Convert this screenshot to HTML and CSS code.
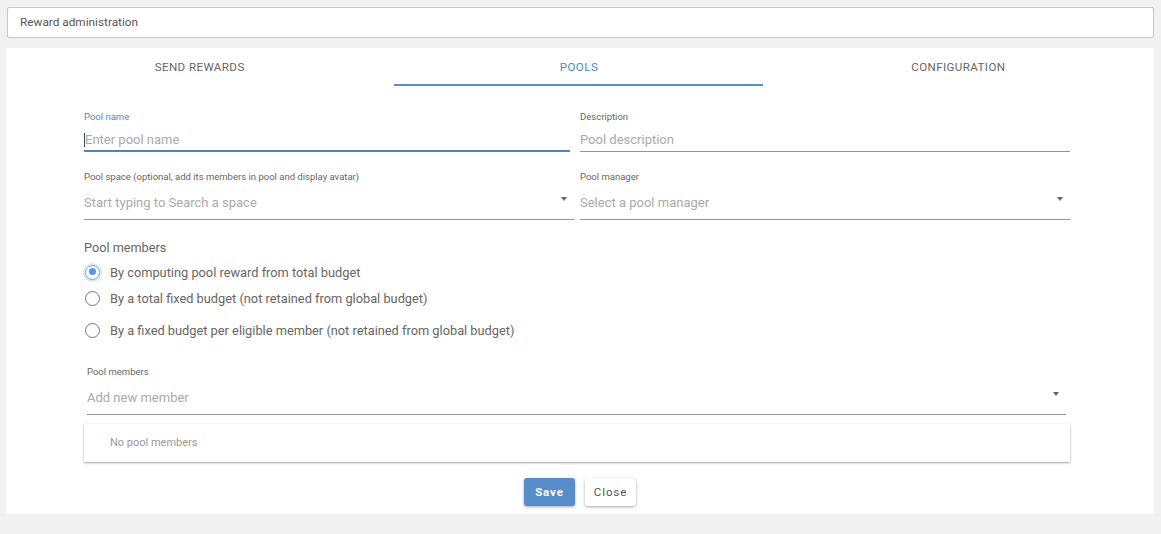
FILE: index.html
```html
<!DOCTYPE html>
<html>
<head>
<meta charset="utf-8">
<link rel="stylesheet" href="styles.css">
</head>
<body>
<div class="topbar">Reward administration</div>
<div class="panel">
  <div class="tabs">
    <div class="tab">SEND REWARDS</div>
    <div class="tab active">POOLS</div>
    <div class="tab">CONFIGURATION</div>
  </div>
  <div class="form">
    <div class="row row1">
      <div class="field focused">
        <div class="label">Pool name</div>
        <div class="input"><span class="caret"></span><span class="ph">Enter pool name</span></div>
      </div>
      <div class="field">
        <div class="label">Description</div>
        <div class="input"><span class="ph">Pool description</span></div>
      </div>
    </div>
    <div class="row row2">
      <div class="field sel">
        <div class="label">Pool space (optional, add its members in pool and display avatar)</div>
        <div class="input"><span class="ph">Start typing to Search a space</span><span class="arrow"></span></div>
      </div>
      <div class="field sel">
        <div class="label">Pool manager</div>
        <div class="input"><span class="ph">Select a pool manager</span><span class="arrow"></span></div>
      </div>
    </div>
    <div class="heading">Pool members</div>
    <div class="radios">
      <div class="radio checked"><span class="circle"></span><span>By computing pool reward from total budget</span></div>
      <div class="radio"><span class="circle"></span><span>By a total fixed budget (not retained from global budget)</span></div>
      <div class="radio third"><span class="circle"></span><span>By a fixed budget per eligible member (not retained from global budget)</span></div>
    </div>
    <div class="field sel members">
      <div class="label">Pool members</div>
      <div class="input"><span class="ph">Add new member</span><span class="arrow"></span></div>
    </div>
    <div class="card">No pool members</div>
    <div class="actions">
      <button class="btn primary">Save</button>
      <button class="btn">Close</button>
    </div>
  </div>
</div>
</body>
</html>
```

FILE: styles.css
```css
* { box-sizing: border-box; }
html, body { margin: 0; padding: 0; }
body {
  background: #f1f1f1;
  font-family: Roboto, "Liberation Sans", Arial, sans-serif;
  color: #666;
  height: 534px;
  overflow: hidden;
}
.topbar {
  margin: 7px 7px 0 7px;
  height: 31px;
  background: #fff;
  border: 1px solid #c8c8c8;
  border-radius: 2px;
  padding-left: 12px;
  font-size: 11.8px;
  line-height: 29px;
  color: #555;
}
.panel {
  margin: 10px 7px 0 6px;
  height: 466px;
  background: #fff;
}
.tabs {
  display: flex;
  height: 39px;
  padding: 0 6px 0 4px;
}
.tab {
  flex: 1;
  text-align: center;
  font-size: 11.6px;
  line-height: 39px;
  color: #666;
  letter-spacing: 0.4px;
  position: relative;
}
.tab.active { color: #4f88c6; }
.tab.active::after {
  content: "";
  position: absolute;
  left: 5px;
  right: 6px;
  bottom: 1px;
  height: 2px;
  background: #5a8dc9;
}
.form {
  padding: 0 84px 0 78px;
}
.row {
  display: flex;
  gap: 6px;
}
.row > .field { flex: 1; }
.row1 { margin-top: 24px; }
.row2 { margin-top: 19px; }
.field .label {
  font-size: 9.5px;
  line-height: 12px;
  height: 12px;
  color: #666;
  white-space: nowrap;
}
.field.focused .label { color: #4f88c6; }
.field .input {
  position: relative;
  border-bottom: 1px solid #959595;
  display: flex;
  align-items: center;
  font-size: 13px;
  line-height: 16px;
  color: #aaa;
  padding: 9px 0 3px 0;
  height: 29px;
}
.row1 .field:first-child .input { margin-right: 4px; }
.field.focused .input {
  border-bottom: 2px solid #4a84c4;
  padding-bottom: 2px;
}
.caret {
  display: inline-block;
  width: 1px;
  height: 14px;
  background: #2a4a70;
}
.field.sel .input {
  height: 37px;
  padding: 12px 0 8px 0;
}
.arrow {
  position: absolute;
  right: 7px;
  top: 14px;
  width: 0;
  height: 0;
  border-left: 3.5px solid transparent;
  border-right: 3.5px solid transparent;
  border-top: 4px solid #666;
}
.heading {
  margin-top: 20px;
  font-size: 12.7px;
  line-height: 16px;
  color: #666;
}
.radios { margin-top: 7px; }
.radio {
  display: flex;
  align-items: center;
  height: 18px;
  font-size: 12.8px;
  color: #666;
  margin-bottom: 8px;
}
.radio.third { margin-top: 14px; }
.radio .circle {
  width: 15px;
  height: 15px;
  border-radius: 50%;
  border: 1.5px solid #777;
  margin: 0 10px 0 1px;
  flex: none;
  position: relative;
}
.radio.checked .circle {
  border-color: #6b9eea;
  box-shadow: 0 0 0 2px #dde8fb;
}
.radio.checked .circle::after {
  content: "";
  position: absolute;
  left: 2.5px;
  top: 2.5px;
  width: 7px;
  height: 7px;
  border-radius: 50%;
  background: #5d93e8;
}
.field.members {
  margin: 27px 4px 0 3px;
}
.field.members .input {
  height: 37px;
  padding: 12px 0 8px 0;
}
.card {
  margin-top: 9px;
  height: 38px;
  background: #fff;
  box-shadow: 0 1px 2px rgba(0,0,0,0.35), 0 0 1px rgba(0,0,0,0.1);
  font-size: 11px;
  color: #999;
  padding-left: 26px;
  line-height: 38px;
}
.actions {
  display: flex;
  justify-content: center;
  gap: 10px;
  margin-top: 16px;
  padding-left: 6px;
}
.btn {
  height: 28px;
  width: 51px;
  border: none;
  border-radius: 3px;
  background: #fff;
  color: #555;
  font-family: Roboto, "Liberation Sans", Arial, sans-serif;
  font-size: 11.5px;
  letter-spacing: 0.9px;
  box-shadow: 0 1px 3px rgba(0,0,0,0.35);
  padding: 0;
}
.btn.primary {
  background: #578dcb;
  color: #fff;
  font-weight: bold;
}
```
